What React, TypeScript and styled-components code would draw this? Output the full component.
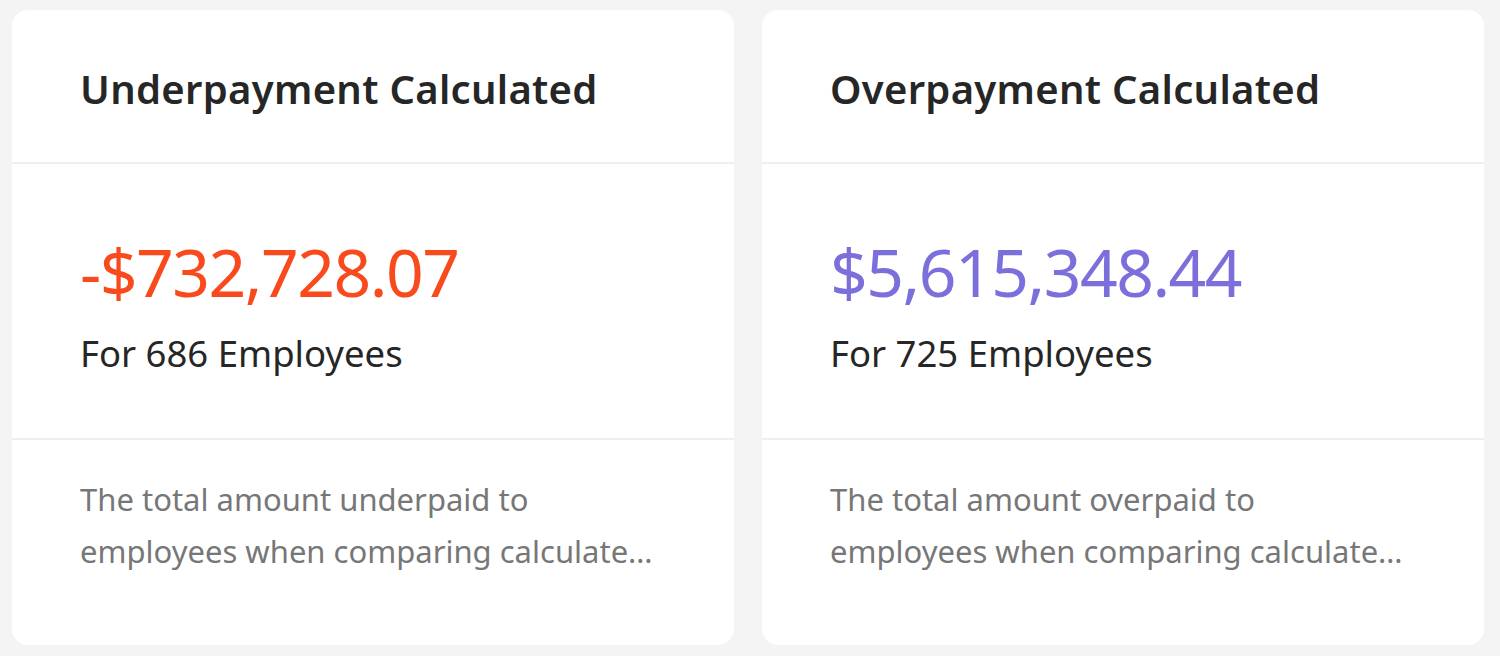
import React from 'react';
import styled, { createGlobalStyle } from 'styled-components';

type Tone = 'under' | 'over';

type Summary = {
  id: string;
  title: string;
  amount: string;
  employees: number;
  tone: Tone;
  description: string;
};

const summaries: Summary[] = [
  {
    id: 'under',
    title: 'Underpayment Calculated',
    amount: '-$732,728.07',
    employees: 686,
    tone: 'under',
    description: 'The total amount underpaid to employees when comparing calculate…',
  },
  {
    id: 'over',
    title: 'Overpayment Calculated',
    amount: '$5,615,348.44',
    employees: 725,
    tone: 'over',
    description: 'The total amount overpaid to employees when comparing calculate…',
  },
];

const App: React.FC = () => {
  return (
    <>
      <GlobalStyle />
      <Page>
        {summaries.map(item => (
          <Card key={item.id}>
            <CardHeader>
              <Title>{item.title}</Title>
            </CardHeader>
            <CardBody>
              <Amount $tone={item.tone}>{item.amount}</Amount>
              <Employees>For {item.employees} Employees</Employees>
            </CardBody>
            <CardFooter>
              <Description>{item.description}</Description>
            </CardFooter>
          </Card>
        ))}
      </Page>
    </>
  );
};

const GlobalStyle = createGlobalStyle`
  html, body {
    margin: 0;
    padding: 0;
    background: #f4f4f4;
  }

  body {
    font-family: 'Noto Sans', 'Open Sans', sans-serif;
    -webkit-font-smoothing: antialiased;
  }
`;

const Page = styled.div`
  display: grid;
  grid-template-columns: 1fr 1fr;
  gap: 28px;
  padding: 10px 16px 11px 12px;
  height: 656px;
  box-sizing: border-box;
`;

const Card = styled.div`
  display: flex;
  flex-direction: column;
  background: #ffffff;
  border-radius: 16px;
  overflow: hidden;
`;

const CardHeader = styled.div`
  display: flex;
  align-items: center;
  height: 154px;
  padding: 4px 68px 0;
  border-bottom: 2px solid #efefef;
  box-sizing: border-box;
`;

const Title = styled.h2`
  margin: 0;
  font-size: 40px;
  font-weight: 600;
  color: #262626;
  letter-spacing: 0.3px;
`;

const CardBody = styled.div`
  display: flex;
  flex-direction: column;
  height: 276px;
  padding: 68px 68px 0;
  border-bottom: 2px solid #efefef;
  box-sizing: border-box;
`;

const Amount = styled.div<{ $tone: Tone }>`
  font-size: 66px;
  line-height: 1.2;
  letter-spacing: -1.5px;
  color: ${({ $tone }) => ($tone === 'under' ? '#f84a1c' : '#7b6fdc')};
`;

const Employees = styled.div`
  font-size: 36.5px;
  line-height: 1.3;
  color: #262626;
  margin-top: 19px;
`;

const CardFooter = styled.div`
  flex: 1;
  padding: 33px 68px 0;
`;

const Description = styled.p`
  margin: 0;
  font-size: 31px;
  line-height: 52px;
  color: #777777;
`;

export default App;
